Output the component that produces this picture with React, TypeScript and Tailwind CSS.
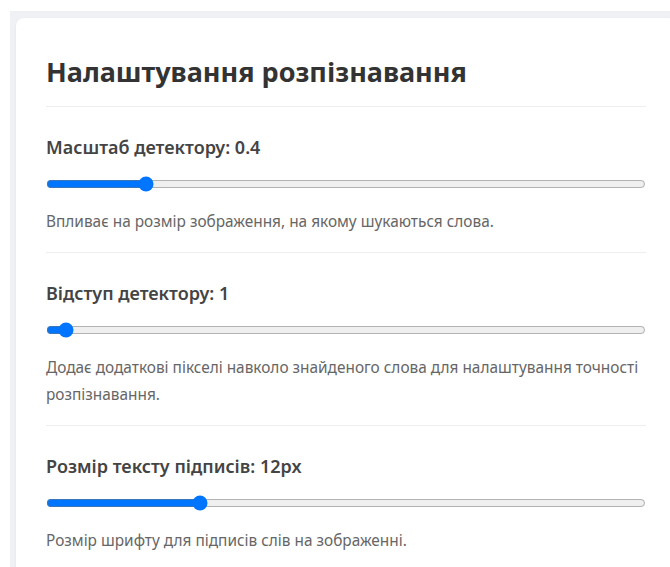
import React, { useState } from "react";

type Setting = {
  id: string;
  label: string;
  min: number;
  max: number;
  step: number;
  value: number;
  unit?: string;
  hint: string;
};

const initial: Setting[] = [
  {
    id: "scale",
    label: "Масштаб детектору",
    min: 0.1,
    max: 2,
    step: 0.1,
    value: 0.4,
    hint: "Впливає на розмір зображення, на якому шукаються слова.",
  },
  {
    id: "padding",
    label: "Відступ детектору",
    min: 0,
    max: 50,
    step: 1,
    value: 1,
    hint: "Додає додаткові пікселі навколо знайденого слова для налаштування точності розпізнавання.",
  },
  {
    id: "fontSize",
    label: "Розмір тексту підписів",
    min: 8,
    max: 24,
    step: 1,
    value: 12,
    unit: "px",
    hint: "Розмір шрифту для підписів слів на зображенні.",
  },
];

export default function App() {
  const [settings, setSettings] = useState(initial);

  const update = (id: string, v: number) =>
    setSettings((s) => s.map((x) => (x.id === id ? { ...x, value: v } : x)));

  return (
    <div
      className="h-[567px] w-[670px] overflow-hidden bg-white pl-[10px] pt-[11px]"
      style={{ fontFamily: '"Segoe UI", "Noto Sans", "Open Sans", sans-serif' }}
    >
      <div className="h-[600px] w-[700px] bg-[#f0f1f5] pl-[6px] pt-[7px]">
        <div className="w-[660px] rounded-lg bg-white px-[30px] pt-[36px] pb-[30px] shadow-[0_1px_3px_rgba(0,0,0,0.06)]">
          <h2 className="border-b border-[#eeeeee] pb-[16px] text-[27px] font-bold leading-[36px] text-[#333]">
            Налаштування розпізнавання
          </h2>
          {settings.map((s, i) => (
            <div
              key={s.id}
              className={
                i < settings.length - 1
                  ? "border-b border-[#eeeeee] pt-[28px] pb-[17px]"
                  : "pt-[28px] pb-[17px]"
              }
            >
              <label
                htmlFor={s.id}
                className="block text-[18px] font-semibold leading-[24px] text-[#444]"
              >
                {s.label}: {s.value}
                {s.unit ?? ""}
              </label>
              <input
                id={s.id}
                type="range"
                min={s.min}
                max={s.max}
                step={s.step}
                value={s.value}
                onChange={(e) => update(s.id, Number(e.target.value))}
                className="mt-[17px] block w-full accent-[#0075ff]"
              />
              <p className="mt-[16px] text-[15.4px] leading-[27px] text-[#666]">{s.hint}</p>
            </div>
          ))}
        </div>
      </div>
    </div>
  );
}
